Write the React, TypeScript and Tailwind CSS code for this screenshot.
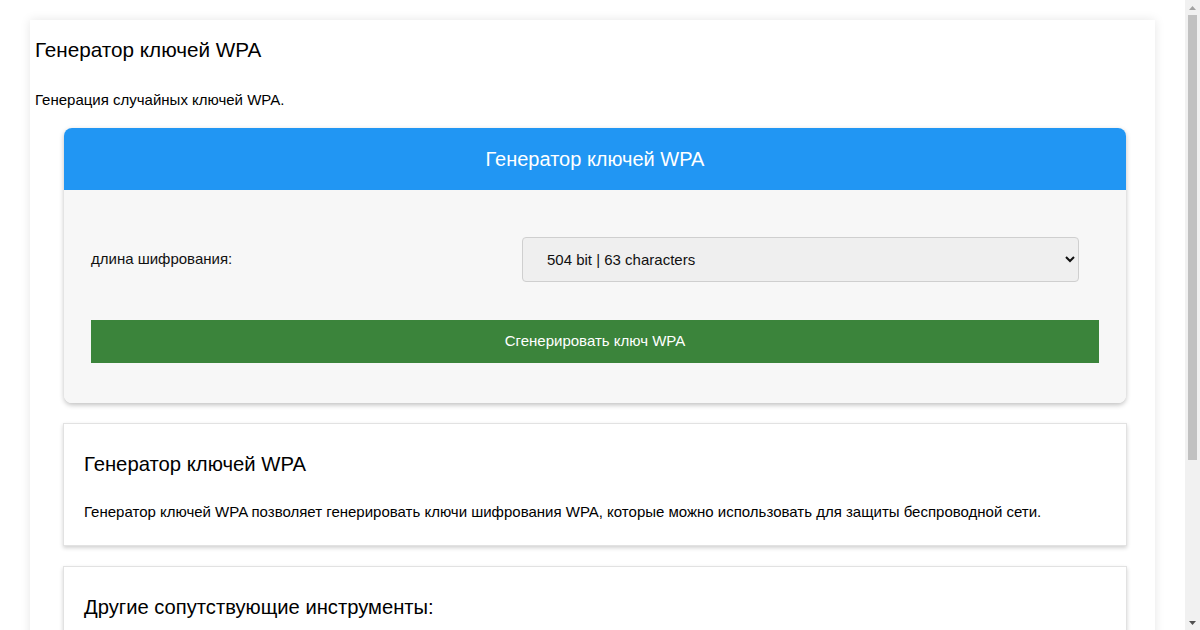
import React from "react";

function Scrollbar() {
  return (
    <div className="w-[15px] h-[630px] bg-[#f1f1f1] flex flex-col items-center shrink-0">
      <div className="h-[15px] w-full flex items-center justify-center">
        <svg width="7" height="4" viewBox="0 0 7 4">
          <polygon points="0,4 7,4 3.5,0" fill="#a3a3a3" />
        </svg>
      </div>
      <div className="w-[9px] h-[445px] bg-[#c1c1c1]" />
      <div className="flex-1" />
      <div className="h-[15px] w-full flex items-center justify-center">
        <svg width="7" height="4" viewBox="0 0 7 4">
          <polygon points="0,0 7,0 3.5,4" fill="#505050" />
        </svg>
      </div>
    </div>
  );
}

export default function App() {
  const font = { fontFamily: '"Liberation Sans", Arial, sans-serif' };
  return (
    <div className="h-[630px] flex overflow-hidden bg-white" style={font}>
      <div className="flex-1 min-w-0 h-[630px] overflow-hidden">
        <div className="pt-[20px] pb-[20px]">
          <div className="mx-[30px] bg-white shadow-[0_0_10px_rgba(0,0,0,0.1)] px-[5px] pt-[18px] pb-[40px] text-black">
            <h1 className="text-[20.7px] leading-[24px] font-normal">Генератор ключей WPA</h1>
            <p className="mt-[29px] text-[15px] leading-[17px]">Генерация случайных ключей WPA.</p>

            <div className="mt-[20px] ml-[29px] mr-[24px] rounded-[8px] shadow-[0_2px_5px_rgba(0,0,0,0.25)] overflow-hidden">
              <div className="bg-[#2196f3] h-[62px] flex items-center justify-center text-white text-[20px]">
                Генератор ключей WPA
              </div>
              <div className="bg-[#f7f7f7] px-[27px] pt-[47px] pb-[40px]">
                <div className="flex items-center h-[45px]">
                  <label className="w-[431px] text-[15px] text-[#111]">длина шифрования:</label>
                  <select
                    defaultValue="504"
                    className="w-[557px] h-[45px] bg-[#efefef] border border-[#cfcfcf] rounded-[4px] pl-[20px] pr-[6px] text-[15px] text-[#111]"
                    style={font}
                  >
                    <option value="64">64 bit | 8 characters</option>
                    <option value="128">128 bit | 16 characters</option>
                    <option value="256">256 bit | 32 characters</option>
                    <option value="504">504 bit | 63 characters</option>
                  </select>
                </div>
                <button className="mt-[38px] w-full h-[43px] bg-[#3b843b] text-white text-[15px] flex items-center justify-center">
                  Сгенерировать ключ WPA
                </button>
              </div>
            </div>

            <div className="mt-[20px] ml-[28px] mr-[23px] bg-white border border-[#e2e2e2] shadow-[0_2px_4px_rgba(0,0,0,0.18)] px-[20px] pt-[28px] pb-[25px]">
              <h2 className="text-[20.3px] leading-[24px] font-normal">Генератор ключей WPA</h2>
              <p className="mt-[27px] text-[15px] leading-[17px]">
                Генератор ключей WPA позволяет генерировать ключи шифрования WPA, которые можно использовать для защиты беспроводной сети.
              </p>
            </div>

            <div className="mt-[20px] ml-[28px] mr-[23px] bg-white border border-[#e2e2e2] shadow-[0_2px_4px_rgba(0,0,0,0.18)] px-[20px] pt-[28px] pb-[25px]">
              <h2 className="text-[20.2px] leading-[24px] font-normal">Другие сопутствующие инструменты:</h2>
              <ul className="mt-[20px] text-[15px] leading-[26px] text-[#1a0dab]">
                <li>Генератор паролей</li>
                <li>Генератор случайных строк</li>
                <li>Генератор MAC-адресов</li>
                <li>Генератор UUID</li>
                <li>Генератор хэшей</li>
              </ul>
            </div>
          </div>
        </div>
      </div>
      <Scrollbar />
    </div>
  );
}
